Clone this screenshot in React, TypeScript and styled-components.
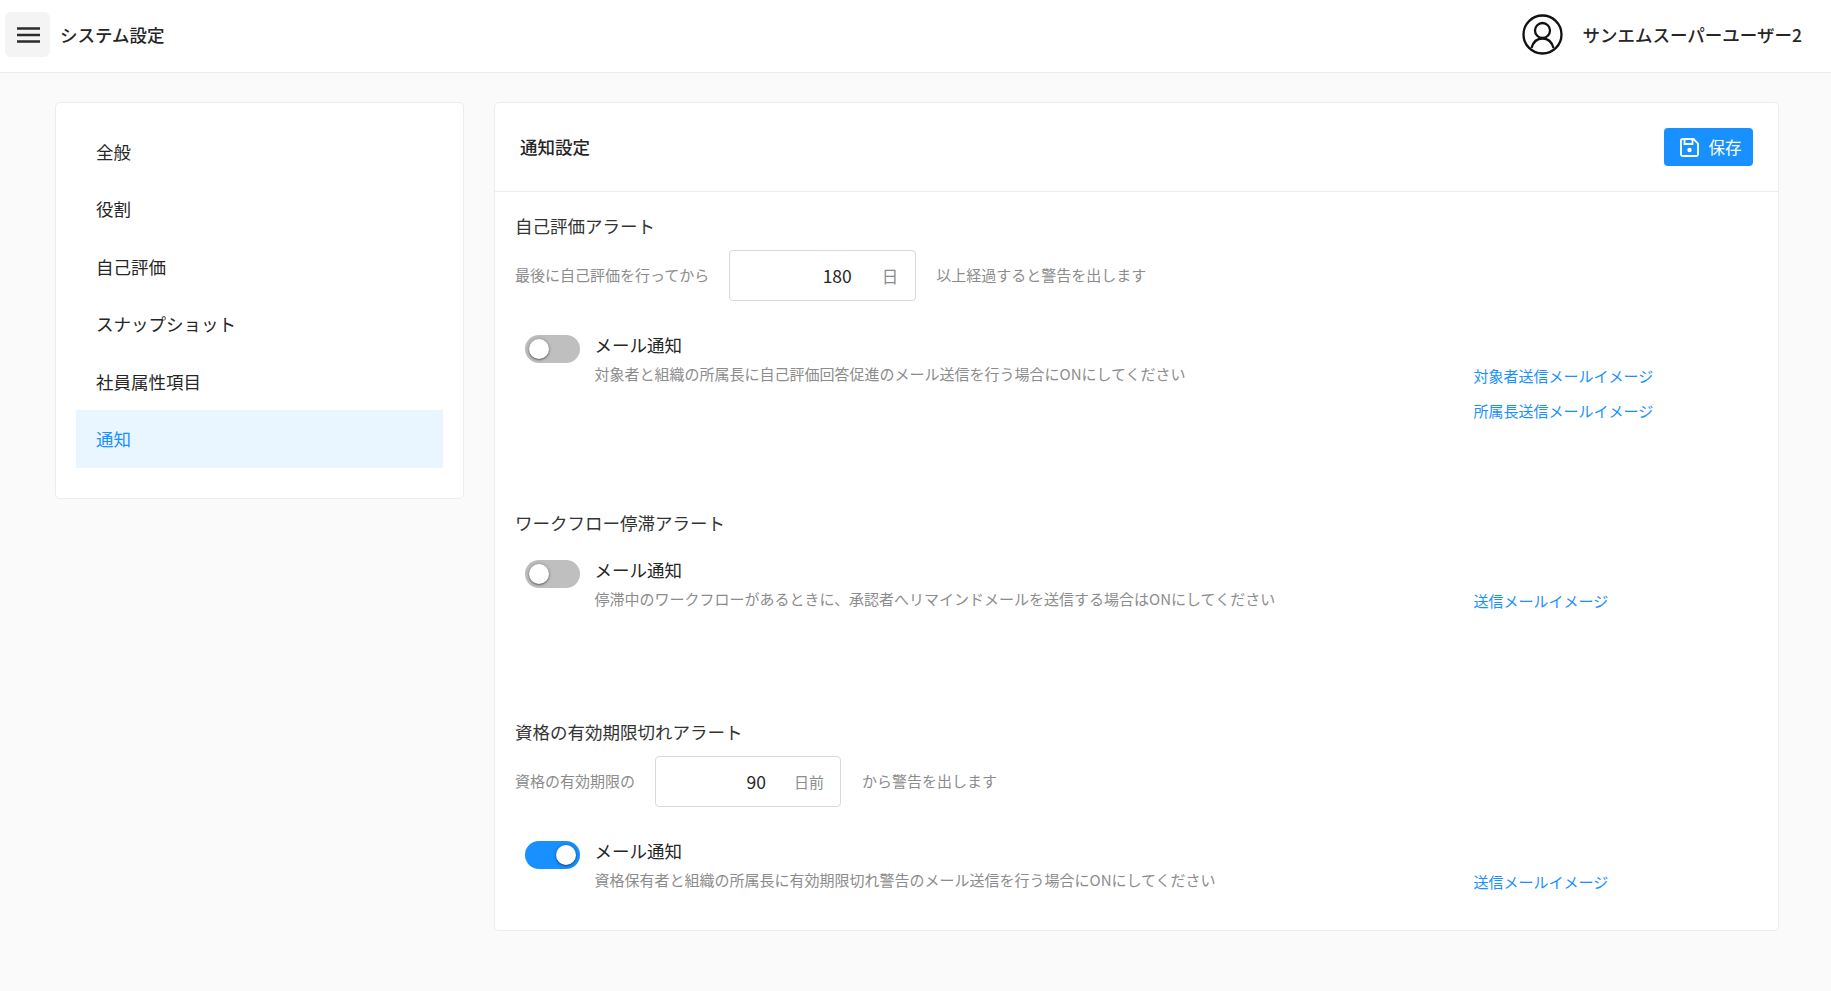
import styled, { createGlobalStyle } from "styled-components";

const GlobalStyle = createGlobalStyle`
  html, body {
    margin: 0;
    padding: 0;
    background: #fafafa;
  }
  * {
    box-sizing: border-box;
  }
  body {
    font-family: "Noto Sans CJK JP", "Noto Sans", sans-serif;
    color: #262626;
  }
`;

const Page = styled.div`
  min-height: 991px;
  display: flex;
  flex-direction: column;
`;

const Header = styled.header`
  height: 73px;
  background: #fff;
  border-bottom: 1px solid #ececec;
  display: flex;
  align-items: center;
  justify-content: space-between;
  padding: 0 29px 3px 5px;
`;

const HeaderLeft = styled.div`
  display: flex;
  align-items: center;
  gap: 10px;
`;

const MenuButton = styled.button`
  width: 45px;
  height: 45px;
  border: 0;
  border-radius: 6px;
  background: #f4f4f4;
  display: flex;
  align-items: center;
  justify-content: center;
  padding: 0 0 0 1px;
`;

const PageTitle = styled.div`
  font-size: 17.5px;
  font-weight: 500;
`;

const UserBox = styled.div`
  display: flex;
  align-items: center;
  gap: 20px;
`;

const UserName = styled.div`
  font-size: 17.5px;
  font-weight: 500;
`;

const Main = styled.main`
  display: flex;
  align-items: flex-start;
  gap: 30px;
  padding: 29px 52px 0 55px;
`;

const Card = styled.div`
  background: #fff;
  border: 1px solid #e9edf2;
  border-radius: 5px;
`;

const SideCard = styled(Card)`
  width: 409px;
  height: 397px;
  padding: 19.5px 20px 0;
`;

const NavItem = styled.div<{ $active?: boolean }>`
  height: 57.5px;
  padding-left: 20px;
  display: flex;
  align-items: center;
  font-size: 17.5px;
  color: ${(p) => (p.$active ? "#1890ff" : "#262626")};
  background: ${(p) => (p.$active ? "#e9f5ff" : "transparent")};
`;

const ContentCard = styled(Card)`
  flex: 1;
  height: 829px;
`;

const ContentHeader = styled.div`
  height: 89px;
  border-bottom: 1px solid #ececec;
  display: flex;
  align-items: center;
  justify-content: space-between;
  padding: 0 25px;
`;

const ContentTitle = styled.div`
  font-size: 17.5px;
  font-weight: 500;
  margin-bottom: 2px;
`;

const SaveButton = styled.button`
  width: 89px;
  height: 38px;
  border: 0;
  border-radius: 4px;
  background: #1890ff;
  color: #fff;
  font-family: inherit;
  font-size: 16.5px;
  display: flex;
  align-items: center;
  gap: 9.5px;
  padding: 0 0 0 16px;
`;

const ContentBody = styled.div`
  padding-top: 21px;
`;

const Section = styled.section<{ $height: number }>`
  height: ${(p) => p.$height}px;
  padding-left: 20px;
`;

const SectionTitle = styled.div`
  font-size: 17.5px;
  line-height: 26px;
  color: #333;
`;

const ThresholdRow = styled.div`
  display: flex;
  align-items: center;
  margin-top: 11px;
  font-size: 15px;
  color: #8c8c8c;
`;

const RowText = styled.span`
  margin-bottom: 2px;
`;

const NumberBox = styled.div<{ $width: number; $pad: number; $after: number }>`
  width: ${(p) => p.$width}px;
  height: 51px;
  margin: 0 ${(p) => p.$after}px 0 20px;
  border: 1px solid #d9d9d9;
  border-radius: 4px;
  display: flex;
  align-items: center;
  justify-content: flex-end;
  padding: 0 ${(p) => p.$pad}px 0 0;
  background: #fff;
`;

const NumberValue = styled.span<{ $gap: number }>`
  font-size: 17.5px;
  color: #262626;
  margin-right: ${(p) => p.$gap}px;
  margin-bottom: 1px;
`;

const UnitLabel = styled.span<{ $size: number }>`
  font-size: ${(p) => p.$size}px;
  color: #8c8c8c;
`;

const NotifyRow = styled.div<{ $top: number }>`
  display: flex;
  align-items: flex-start;
  margin-top: ${(p) => p.$top}px;
`;

const Toggle = styled.div<{ $on?: boolean }>`
  width: 55px;
  height: 28px;
  margin: 3px 14.5px 0 10px;
  border-radius: 14px;
  background: ${(p) => (p.$on ? "#1890ff" : "#bfbfbf")};
  display: flex;
  align-items: center;
  justify-content: ${(p) => (p.$on ? "flex-end" : "flex-start")};
  padding: 0 4px;
  flex-shrink: 0;
`;

const Knob = styled.span`
  width: 20px;
  height: 20px;
  border-radius: 50%;
  background: #fff;
  box-shadow: 0 1px 2px rgba(0, 0, 0, 0.45), 0 0 4px rgba(0, 0, 0, 0.2);
`;

const NotifyText = styled.div`
  width: 879px;
`;

const NotifyLabel = styled.div`
  font-size: 17.5px;
  line-height: 26px;
  color: #262626;
`;

const NotifyHint = styled.div`
  font-size: 15px;
  line-height: 22px;
  margin-top: 5px;
  color: #8c8c8c;
`;

const LinkColumn = styled.div`
  display: flex;
  flex-direction: column;
  gap: 13px;
  padding-top: 33px;
`;

const MailLink = styled.a`
  font-size: 15px;
  line-height: 22px;
  color: #1890ff;
`;

function MenuIcon() {
  return (
    <svg width="23" height="16" viewBox="0 0 23 16" fill="none" stroke="#2b2b2b" strokeWidth="2.6">
      <path d="M0 1.500h23M0 8h23M0 14.500h23" />
    </svg>
  );
}

function UserIcon() {
  return (
    <svg width="41" height="41" viewBox="0 0 41 41" fill="none" stroke="#111" strokeWidth="2.3">
      <circle cx="20.5" cy="20.5" r="19" />
      <circle cx="20.5" cy="16.5" r="7.5" />
      <path d="M9.5 34C11 28.500 15 24.500 20.500 24.500S30 28.500 31.500 34" />
    </svg>
  );
}

function SaveIcon() {
  return (
    <svg width="19" height="19" viewBox="0 0 19 19" fill="none" stroke="#fff" strokeWidth="1.8">
      <path d="M2.500 1h11l4.500 4.500v11a1.500 1.500 0 0 1-1.500 1.500h-14A1.500 1.500 0 0 1 1 16.500v-14A1.500 1.500 0 0 1 2.500 1z" />
      <path d="M4.500 2v4h8V2" />
      <circle cx="9.500" cy="12" r="2.200" fill="#fff" stroke="none" />
    </svg>
  );
}

const navItems = ["全般", "役割", "自己評価", "スナップショット", "社員属性項目", "通知"];

type NotifyProps = {
  top: number;
  on?: boolean;
  hint: string;
  links: string[];
};

function Notify({ top, on, hint, links }: NotifyProps) {
  return (
    <NotifyRow $top={top}>
      <Toggle $on={on}>
        <Knob />
      </Toggle>
      <NotifyText>
        <NotifyLabel>メール通知</NotifyLabel>
        <NotifyHint>{hint}</NotifyHint>
      </NotifyText>
      <LinkColumn>
        {links.map((l) => (
          <MailLink key={l}>{l}</MailLink>
        ))}
      </LinkColumn>
    </NotifyRow>
  );
}

export default function App() {
  return (
    <Page>
      <GlobalStyle />
      <Header>
        <HeaderLeft>
          <MenuButton>
            <MenuIcon />
          </MenuButton>
          <PageTitle>システム設定</PageTitle>
        </HeaderLeft>
        <UserBox>
          <UserIcon />
          <UserName>サンエムスーパーユーザー2</UserName>
        </UserBox>
      </Header>
      <Main>
        <SideCard>
          {navItems.map((n) => (
            <NavItem key={n} $active={n === "通知"}>
              {n}
            </NavItem>
          ))}
        </SideCard>
        <ContentCard>
          <ContentHeader>
            <ContentTitle>通知設定</ContentTitle>
            <SaveButton>
              <SaveIcon />
              保存
            </SaveButton>
          </ContentHeader>
          <ContentBody>
            <Section $height={297}>
              <SectionTitle>自己評価アラート</SectionTitle>
              <ThresholdRow>
                <RowText>最後に自己評価を行ってから</RowText>
                <NumberBox $width={187} $pad={17} $after={20}>
                  <NumberValue $gap={30}>180</NumberValue>
                  <UnitLabel $size={16.5}>日</UnitLabel>
                </NumberBox>
                <RowText>以上経過すると警告を出します</RowText>
              </ThresholdRow>
              <Notify
                top={31}
                hint="対象者と組織の所属長に自己評価回答促進のメール送信を行う場合にONにしてください"
                links={["対象者送信メールイメージ", "所属長送信メールイメージ"]}
              />
            </Section>
            <Section $height={209}>
              <SectionTitle>ワークフロー停滞アラート</SectionTitle>
              <Notify
                top={21}
                hint="停滞中のワークフローがあるときに、承認者へリマインドメールを送信する場合はONにしてください"
                links={["送信メールイメージ"]}
              />
            </Section>
            <Section $height={190}>
              <SectionTitle>資格の有効期限切れアラート</SectionTitle>
              <ThresholdRow>
                <RowText>資格の有効期限の</RowText>
                <NumberBox $width={186} $pad={16} $after={21}>
                  <NumberValue $gap={28}>90</NumberValue>
                  <UnitLabel $size={15}>日前</UnitLabel>
                </NumberBox>
                <RowText>から警告を出します</RowText>
              </ThresholdRow>
              <Notify
                top={31}
                on
                hint="資格保有者と組織の所属長に有効期限切れ警告のメール送信を行う場合にONにしてください"
                links={["送信メールイメージ"]}
              />
            </Section>
          </ContentBody>
        </ContentCard>
      </Main>
    </Page>
  );
}
